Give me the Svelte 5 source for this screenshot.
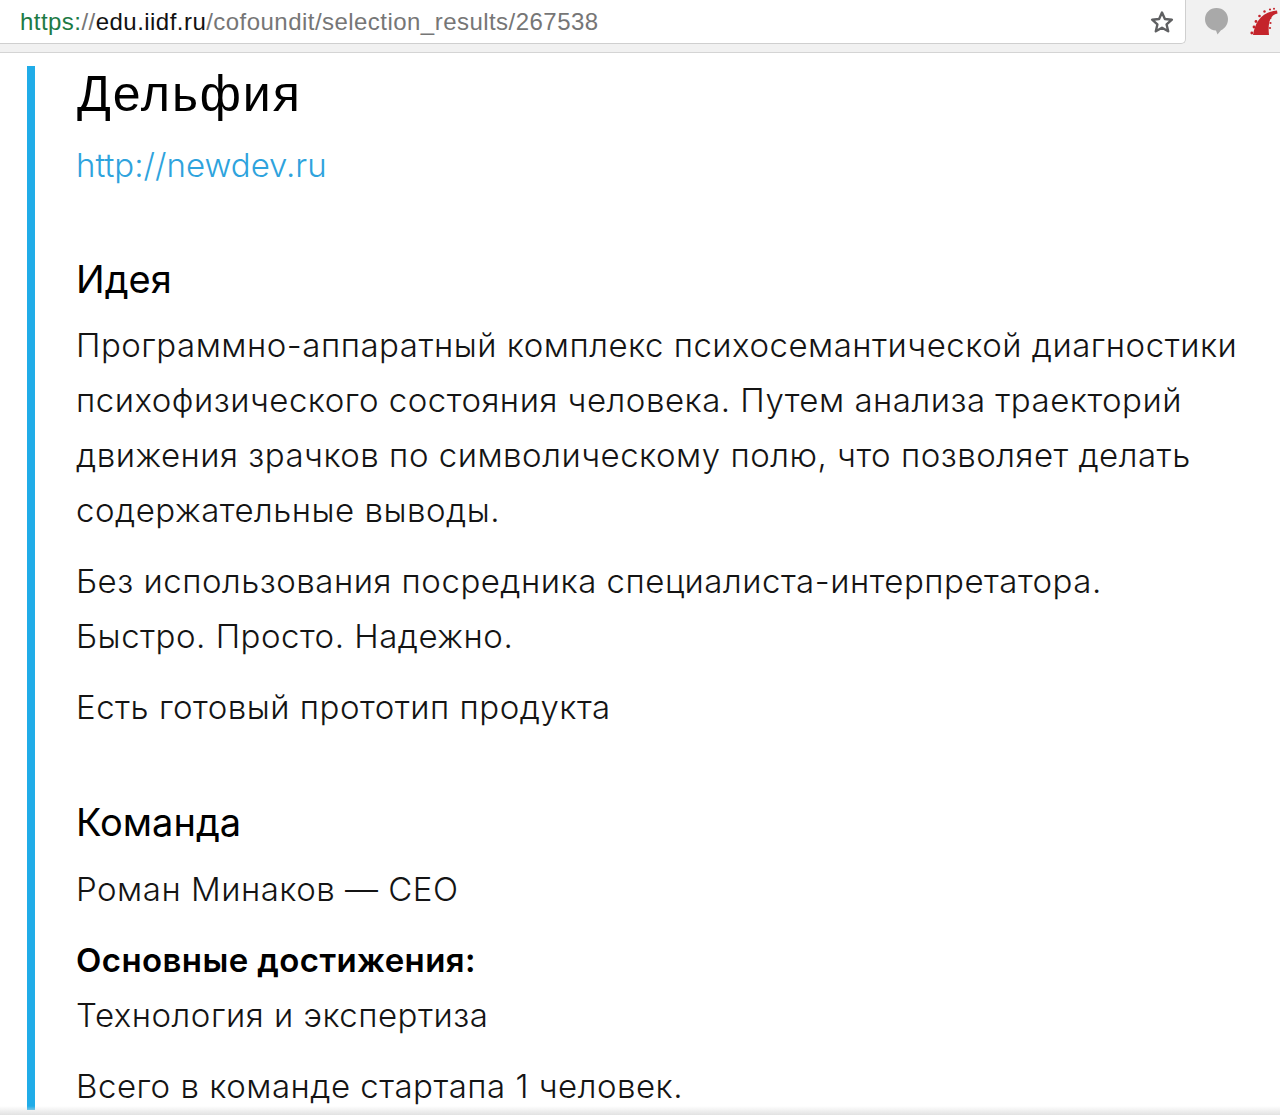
<script>
  const paragraphs = [
    ['Без использования посредника специалиста-интерпретатора.', 'Быстро. Просто. Надежно.'],
    ['Есть готовый прототип продукта']
  ];
</script>

<div class="page">
  <header class="toolbar">
    <div class="omnibox">
      <div class="url">
        <span class="scheme">https:</span><span class="path">//</span><span class="host">edu.iidf.ru</span><span class="path">/cofoundit/selection_results/267538</span>
      </div>
      <svg class="star" width="26" height="26" viewBox="0 0 26 26">
        <path d="M13 3.5l2.900 6.500 7 .7-5.300 4.700 1.600 6.900L13 18.700l-6.200 3.600 1.600-6.900-5.300-4.700 7-.7z" fill="none" stroke="#5f6062" stroke-width="2.4" stroke-linejoin="round" />
      </svg>
    </div>
    <div class="extensions">
      <svg width="26" height="28" viewBox="0 0 26 28">
        <path d="M12.500 1C19 1 24 5.800 24 12S20 22 17 23.200L13.500 27.500 12 23.500C5.500 23 1 18.300 1 12.200 1 5.800 6 1 12.500 1z" fill="#a9a9a9" />
      </svg>
      <svg class="tentacle" width="30" height="30" viewBox="0 0 30 30">
        <path d="M3 28C5 16 11 5 27 3.500L27.500 6.500C21 7.500 17.500 14 19 28z" fill="#c4242b" />
        <g fill="#c4242b">
          <circle cx="1.800" cy="26" r="1.400" /><circle cx="4" cy="20" r="1.400" /><circle cx="6" cy="14.500" r="1.400" /><circle cx="9.500" cy="9" r="1.300" /><circle cx="14.500" cy="4.500" r="1.200" /><circle cx="20" cy="2.500" r="1.100" /><circle cx="24" cy="1.800" r="1" />
          <circle cx="20.500" cy="16" r="1.100" /><circle cx="20.500" cy="11" r="1" /><circle cx="20" cy="21" r="1.100" />
        </g>
      </svg>
    </div>
  </header>

  <main class="content">
    <section class="card">
      <h1>Дельфия</h1>
      <a class="site" href="http://newdev.ru">http://newdev.ru</a>

      <h2>Идея</h2>
      <p>Программно-аппаратный комплекс психосемантической диагностики психофизического состояния человека. Путем анализа траекторий движения зрачков по символическому полю, что позволяет делать содержательные выводы.</p>
      {#each paragraphs as lines}
        <p>
          {#each lines as line}
            <span class="line">{line}</span>
          {/each}
        </p>
      {/each}

      <h2 class="team">Команда</h2>
      <p>Роман Минаков — CEO</p>
      <p><strong class="line">Основные достижения:</strong><span class="line">Технология и экспертиза</span></p>
      <p>Всего в команде стартапа 1 человек.</p>
    </section>
  </main>
  <div class="fade"></div>
</div>

<style>
  :global(body) {
    background: #fff;
  }

  .page {
    position: relative;
    width: 1280px;
    height: 1115px;
    overflow: hidden;
    font-family: Inter, sans-serif;
    color: #141414;
  }

  .toolbar {
    display: flex;
    height: 52px;
    background: #f1f1f1;
    border-bottom: 1px solid #d4d4d4;
  }

  .omnibox {
    display: flex;
    align-items: center;
    justify-content: space-between;
    width: 1186px;
    height: 44px;
    padding: 0 10px 0 20px;
    box-sizing: border-box;
    background: #fff;
    border: 1px solid #cfcfcf;
    border-width: 0 1px 1px 0;
    border-radius: 0 0 5px 0;
  }

  .url {
    padding-top: 1px;
    font-family: "Liberation Sans", sans-serif;
    font-size: 24px;
    letter-spacing: 0.46px;
    color: #767676;
  }

  .scheme {
    color: #1d7a45;
  }

  .host {
    color: #111;
  }

  .extensions {
    display: flex;
    gap: 20px;
    padding: 7px 0 0 18px;
  }

  .tentacle {
    flex: none;
  }

  .content {
    padding: 13px 0 0 27px;
  }

  .card {
    height: 1044px;
    padding-left: 41px;
    padding-right: 30px;
    border-left: 8px solid #20ace8;
  }

  h1 {
    margin: 0 0 0 1px;
    font-family: "Liberation Sans", sans-serif;
    font-size: 50px;
    line-height: 56px;
    letter-spacing: 1.9px;
    font-weight: 400;
    color: #000;
  }

  .site {
    display: block;
    margin-top: 16px;
    font-size: 33px;
    line-height: 55px;
    font-weight: 300;
    color: #2ea3dd;
    text-decoration: none;
  }

  h2 {
    margin: 61px 0 14px;
    font-size: 38px;
    line-height: 50px;
    font-weight: 400;
    color: #000;
  }

  h2.team {
    margin: 62px 0 15px;
  }

  p {
    margin: 0 0 16px;
    font-size: 33px;
    line-height: 55px;
    letter-spacing: 0.5px;
    font-weight: 300;
  }

  .line {
    display: block;
  }

  strong {
    font-weight: 600;
    letter-spacing: 0.4px;
    color: #000;
  }

  .fade {
    position: absolute;
    left: 0;
    right: 0;
    bottom: 0;
    height: 9px;
    background: linear-gradient(rgba(225, 225, 225, 0), #e2e2e2);
  }
</style>
